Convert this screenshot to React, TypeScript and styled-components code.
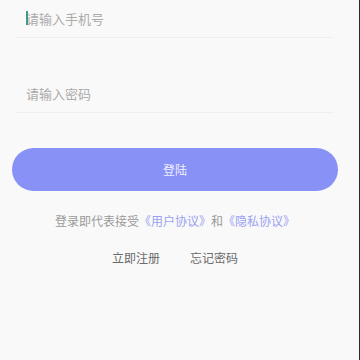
import React from "react";
import styled, { createGlobalStyle } from "styled-components";

const GlobalStyle = createGlobalStyle`
  html, body {
    margin: 0;
    padding: 0;
    background: #f9f9f9;
  }
  * {
    box-sizing: border-box;
  }
`;

const Page = styled.div`
  width: 360px;
  height: 360px;
  display: flex;
  background: #f9f9f9;
  border-right: 1px solid #2a2a2a;
  font-family: "Noto Sans CJK SC", "Noto Sans", sans-serif;
`;

const Content = styled.div`
  width: 350px;
  display: flex;
  flex-direction: column;
`;

const Field = styled.div<{ $gap?: number }>`
  margin: ${(p) => p.$gap ?? 0}px 16px 0 15px;
  height: 38px;
  display: flex;
  align-items: center;
  padding-left: 11px;
  border-bottom: 1px solid #efefef;
  position: relative;
`;

const Placeholder = styled.span`
  font-size: 13px;
  color: #ababab;
  line-height: 1;
`;

const Caret = styled.span`
  position: absolute;
  left: 11px;
  top: 11px;
  width: 1.5px;
  height: 14px;
  background: #3f9c8c;
`;

const LoginButton = styled.button`
  margin: 35px 12px 0 12px;
  height: 43px;
  border: none;
  border-radius: 22px;
  background: #8891f6;
  color: rgba(255, 255, 255, 0.88);
  font-family: inherit;
  font-size: 12px;
  cursor: pointer;
`;

const Agreement = styled.p`
  margin: 22px 0 0;
  text-align: center;
  font-size: 12px;
  line-height: 16px;
  color: #9a9a9a;
`;

const Link = styled.span`
  color: #9aa1f0;
`;

const Actions = styled.div`
  margin-top: 21px;
  display: flex;
  justify-content: center;
  gap: 30px;
`;

const Action = styled.span`
  font-size: 12px;
  line-height: 16px;
  color: #6a6a6a;
  cursor: pointer;
`;

export default function App() {
  return (
    <>
      <GlobalStyle />
      <Page>
        <Content>
          <Field>
            <Caret />
            <Placeholder>请输入手机号</Placeholder>
          </Field>
          <Field $gap={37}>
            <Placeholder>请输入密码</Placeholder>
          </Field>
          <LoginButton>登陆</LoginButton>
          <Agreement>
            登录即代表接受<Link>《用户协议》</Link>和<Link>《隐私协议》</Link>
          </Agreement>
          <Actions>
            <Action>立即注册</Action>
            <Action>忘记密码</Action>
          </Actions>
        </Content>
      </Page>
    </>
  );
}
